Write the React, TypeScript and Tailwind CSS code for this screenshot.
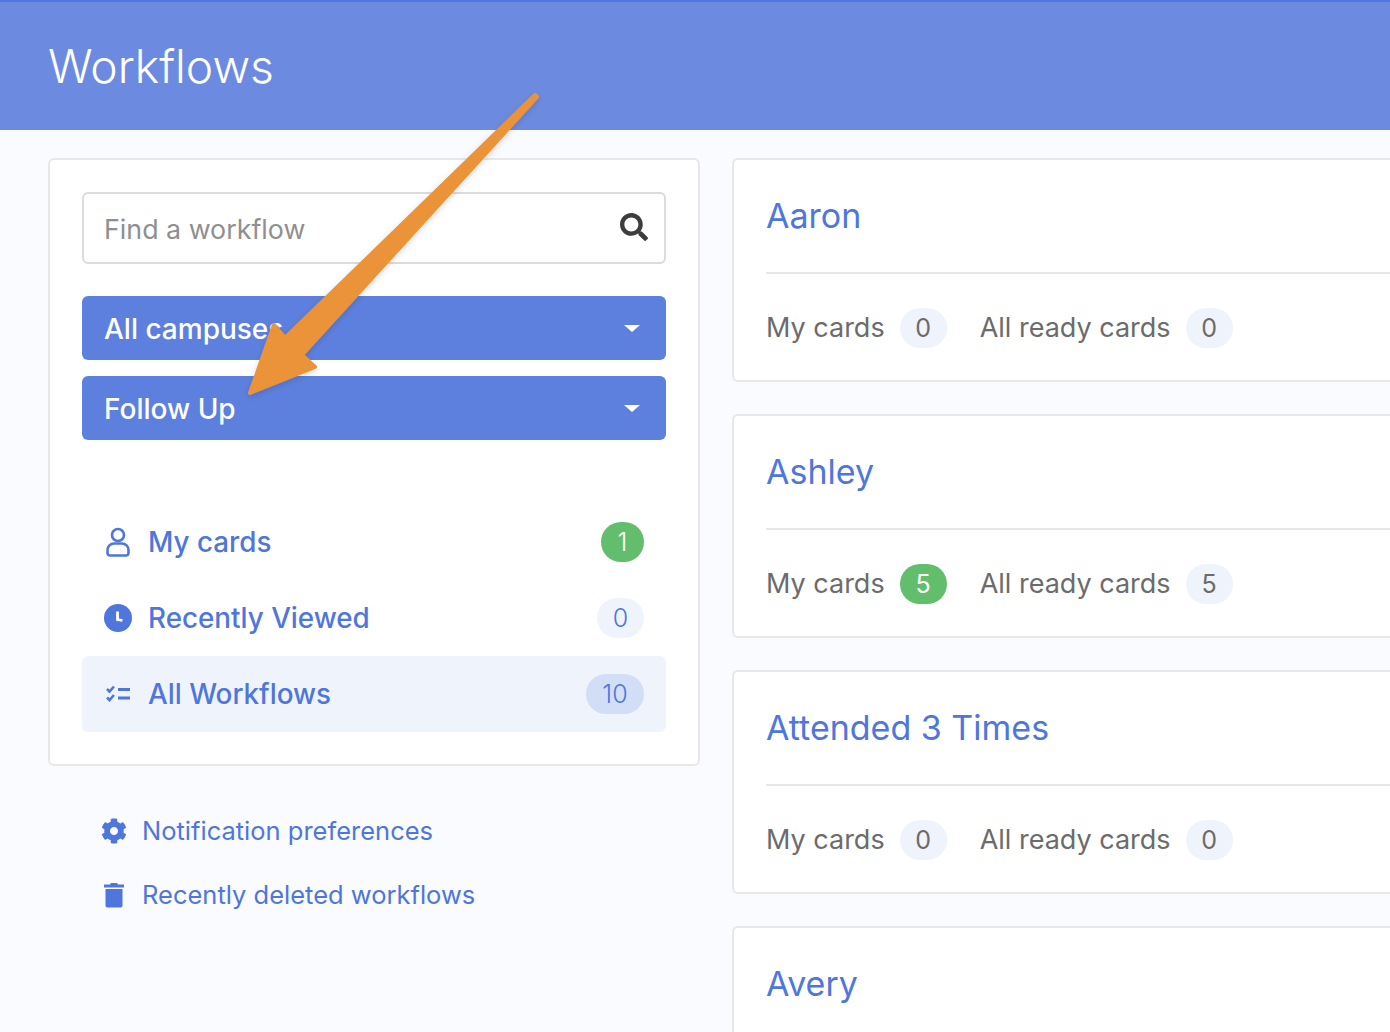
import { FaSearch } from "react-icons/fa";

const workflows = [
  { name: "Aaron", mine: 0, ready: 0 },
  { name: "Ashley", mine: 5, ready: 5 },
  { name: "Attended 3 Times", mine: 0, ready: 0 },
  { name: "Avery" },
];

function Caret() {
  return <span className="h-0 w-0 border-x-[8px] border-t-[7px] border-x-transparent border-t-white" />;
}

function Dropdown({ label }: { label: string }) {
  return (
    <div className="flex h-16 items-center justify-between rounded-md bg-[#5d80df] pl-[22px] pr-[26px] pt-[1px] text-[28px] font-medium text-white">
      <span>{label}</span>
      <Caret />
    </div>
  );
}

function Count({ value, className }: { value: number; className: string }) {
  return (
    <span className={`flex h-10 items-center justify-center rounded-full pt-[1px] text-[25px] ${className}`}>
      {value}
    </span>
  );
}

function UserIcon() {
  return (
    <svg width="24" height="30" viewBox="0 0 24 30" fill="none" stroke="#4f76dc" strokeWidth="2.6">
      <circle cx="12" cy="8" r="6" />
      <path d="M8 16.5h8a6.5 6.5 0 0 1 6.5 6.5v3a2.5 2.5 0 0 1-2.5 2.5H4A2.5 2.5 0 0 1 1.500 26v-3A6.500 6.500 0 0 1 8 16.500z" />
    </svg>
  );
}

function ClockIcon() {
  return (
    <svg width="28" height="28" viewBox="0 0 28 28">
      <circle cx="14" cy="14" r="14" fill="#4f76dc" />
      <path d="M13.500 7.500v8l5 1" fill="none" stroke="#fff" strokeWidth="2.800" />
    </svg>
  );
}

function TasksIcon() {
  return (
    <svg width="24" height="18" viewBox="0 0 24 18" fill="none" stroke="#4f76dc">
      <path d="M1 4l2.500 2.500L8 1.500M1 12.500L3.500 15 8 10" strokeWidth="2.600" />
      <path d="M12 4.500h12M12 13h12" strokeWidth="3" />
    </svg>
  );
}

function GearIcon() {
  return (
    <svg width="26" height="26" viewBox="0 0 512 512" fill="#4f76dc">
      <path d="M487.400 315.700l-42.600-24.600c4.300-23.200 4.300-47 0-70.200l42.600-24.600c4.900-2.800 7.100-8.600 5.500-14-11.100-35.600-30-67.800-54.700-94.600-3.800-4.100-10-5.100-14.800-2.300L380.800 110c-17.900-15.400-38.500-27.300-60.800-35.100V25.800c0-5.600-3.900-10.500-9.400-11.700-36.700-8.200-74.300-7.800-109.200 0-5.500 1.200-9.400 6.100-9.400 11.700V75c-22.200 7.900-42.800 19.800-60.800 35.100L88.700 85.500c-4.900-2.800-11-1.900-14.800 2.300-24.700 26.700-43.600 58.900-54.700 94.600-1.700 5.400.600 11.200 5.500 14L67.300 221c-4.300 23.200-4.300 47 0 70.200l-42.600 24.600c-4.900 2.800-7.100 8.600-5.500 14 11.100 35.600 30 67.800 54.700 94.600 3.800 4.100 10 5.100 14.800 2.300l42.600-24.600c17.900 15.400 38.500 27.300 60.800 35.100v49.200c0 5.600 3.900 10.500 9.400 11.700 36.700 8.200 74.300 7.800 109.200 0 5.500-1.200 9.400-6.100 9.400-11.700v-49.200c22.200-7.900 42.800-19.800 60.800-35.100l42.600 24.600c4.900 2.800 11 1.900 14.800-2.300 24.700-26.700 43.600-58.900 54.700-94.600 1.500-5.500-.7-11.300-5.600-14.100zM256 336c-44.100 0-80-35.900-80-80s35.900-80 80-80 80 35.900 80 80-35.900 80-80 80z" />
    </svg>
  );
}

function TrashIcon() {
  return (
    <svg width="20" height="26" viewBox="0 0 20 26" fill="#4f76dc">
      <path d="M0 2.500h6L7 1h6l1 1.500h6V5.500H0z" />
      <path d="M1.500 7h17v16.500a2 2 0 0 1-2 2h-13a2 2 0 0 1-2-2z" />
    </svg>
  );
}

function NavRow({
  icon,
  label,
  count,
  badge,
  active,
}: {
  icon: React.ReactNode;
  label: string;
  count: number;
  badge: string;
  active?: boolean;
}) {
  return (
    <div className={`flex h-[76px] items-center rounded-md pl-[22px] pr-[22px] ${active ? "bg-[#eff4fc]" : ""}`}>
      <span className="flex w-[28px] justify-center">{icon}</span>
      <span className="ml-[16px] flex-1 pt-[1px] text-[27.8px] font-medium text-[#4f76dc]">{label}</span>
      <Count value={count} className={`font-light ${badge}`} />
    </div>
  );
}

function WorkflowCard({ name, mine, ready }: { name: string; mine?: number; ready?: number }) {
  return (
    <div className="h-[224px] shrink-0 rounded-l-md border-y-2 border-l-2 border-[#e8e8e8] bg-white pl-[32px]">
      <div className="flex h-[114px] items-center border-b-2 border-[#e8e8e8] pb-[2px] text-[34px] text-[#4f76dc]">
        {name}
      </div>
      {mine !== undefined && ready !== undefined && (
        <div className="flex h-[106px] items-center pt-[2px] text-[27px] text-[#6b6b6b]">
          <span>My cards</span>
          <Count
            value={mine}
            className={`ml-[15px] w-[47px] ${mine > 0 ? "bg-[#62bd6d] text-white" : "bg-[#eff4fc]"}`}
          />
          <span className="ml-[33px]">All ready cards</span>
          <Count value={ready} className="ml-[15px] w-[47px] bg-[#eff4fc]" />
        </div>
      )}
    </div>
  );
}

export default function App() {
  return (
    <div className="relative h-[1032px] w-[1390px] overflow-hidden bg-[#f9fbff] font-['Inter',sans-serif]">
      <header className="flex h-[130px] items-center border-t-2 border-[#4f76dc] bg-[#6c8be0] pl-[48px] pt-[1px]">
        <h1 className="text-[46.200px] font-light text-white">Workflows</h1>
      </header>

      <div className="flex gap-8 pl-12 pt-7">
        <div className="w-[652px] shrink-0">
          <div className="h-[608px] rounded-md border-2 border-[#e8e8e8] bg-white p-8">
            <div className="flex h-[72px] items-center justify-between rounded-md border-2 border-[#dcdcdc] pl-[20px] pr-[16px] text-[26.800px] text-[#8f8f8f]">
              <span className="pt-[3px]">Find a workflow</span>
              <FaSearch size={28} color="#3d3d3d" className="mb-[2px]" />
            </div>
            <div className="mt-8 flex flex-col gap-4">
              <Dropdown label="All campuses" />
              <Dropdown label="Follow Up" />
            </div>
            <div className="mt-[64px]">
              <NavRow icon={<UserIcon />} label="My cards" count={1} badge="w-[43px] bg-[#62bd6d] text-white" />
              <NavRow
                icon={<ClockIcon />}
                label="Recently Viewed"
                count={0}
                badge="w-[47px] bg-[#eff4fc] text-[#4f76dc]"
              />
              <NavRow
                icon={<TasksIcon />}
                label="All Workflows"
                count={10}
                badge="w-[58px] bg-[#d2def6] text-[#4f76dc]"
                active
              />
            </div>
          </div>
          <div className="mt-[49px] flex flex-col gap-[32px] pl-[53px] text-[25.500px] text-[#4f76dc]">
            <div className="flex h-8 items-center gap-[15px]">
              <GearIcon />
              <span>Notification preferences</span>
            </div>
            <div className="flex h-8 items-center gap-[18px] pl-[3px]">
              <TrashIcon />
              <span>Recently deleted workflows</span>
            </div>
          </div>
        </div>

        <div className="flex flex-1 flex-col gap-8">
          {workflows.map((w) => (
            <WorkflowCard key={w.name} {...w} />
          ))}
        </div>
      </div>

      {/* annotation arrow drawn over the screenshot */}
      <svg className="absolute left-0 top-0" width="1390" height="1032" fill="#eb9339">
        <defs>
          <filter id="arrowShadow" x="-20%" y="-20%" width="140%" height="140%">
            <feDropShadow dx="0" dy="2" stdDeviation="3" floodColor="#000" floodOpacity="0.15" />
          </filter>
        </defs>
        <path
          filter="url(#arrowShadow)"
          stroke="#eb9339"
          strokeWidth="4"
          strokeLinejoin="round"
          d="M537 97L302 355L315 367L250 393L274 325L285 338L535 95z"
        />
      </svg>
    </div>
  );
}
